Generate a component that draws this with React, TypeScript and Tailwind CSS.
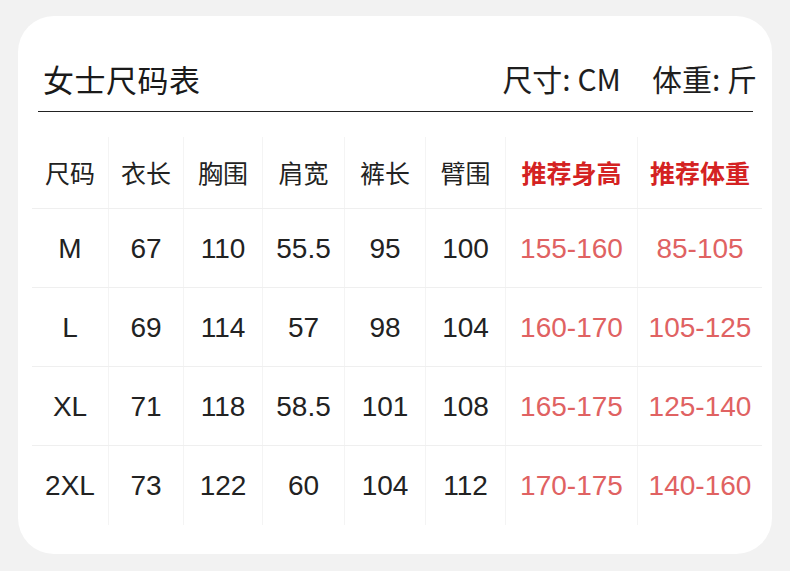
import React from "react";

const widths = [
  "w-[76px]",
  "w-[75px]",
  "w-[79px]",
  "w-[82px]",
  "w-[81px]",
  "w-[80px]",
  "w-[132px]",
  "w-[125px]",
];

const header = ["尺码", "衣长", "胸围", "肩宽", "裤长", "臂围", "推荐身高", "推荐体重"];
const rows = [
  ["M", "67", "110", "55.5", "95", "100", "155-160", "85-105"],
  ["L", "69", "114", "57", "98", "104", "160-170", "105-125"],
  ["XL", "71", "118", "58.5", "101", "108", "165-175", "125-140"],
  ["2XL", "73", "122", "60", "104", "112", "170-175", "140-160"],
];

const cjk = { fontFamily: '"Noto Sans CJK SC", "Noto Sans", sans-serif' };
const num = { fontFamily: '"Liberation Sans", Arial, sans-serif' };

export default function App() {
  return (
    <div className="w-[790px] h-[571px] bg-[#f2f2f2] pt-[16px] px-[18px]">
      <div className="w-[754px] h-[538px] bg-white rounded-[36px] pt-[44px]">
        <div className="h-[36px] flex items-center justify-between pl-[25px] pr-[15px]" style={cjk}>
          <div className="text-[31px] leading-none text-[#1a1a1a] tracking-[0.5px]">女士尺码表</div>
          <div className="text-[30px] leading-none text-[#1e1e1e] flex items-center">
            <span>尺寸: CM</span>
            <span className="ml-[31px]">体重: 斤</span>
          </div>
        </div>
        <div className="mt-[15px] ml-[20px] w-[715px] h-[1px] bg-[#222]" />
        <div className="mt-[25px] ml-[14px] w-[730px]">
          <div className="flex h-[72px] border-b border-[#efefef]">
            {header.map((h, i) => (
              <div
                key={i}
                className={`${widths[i]} shrink-0 h-full flex items-center justify-center text-[25px] leading-none ${
                  i > 0 ? "border-l border-[#f4f4f4]" : ""
                } ${i >= 6 ? "text-[#d42222] font-bold" : "text-[#222]"}`}
                style={cjk}
              >
                {h}
              </div>
            ))}
          </div>
          {rows.map((r, ri) => (
            <div
              key={ri}
              className={`flex h-[79px] ${ri < rows.length - 1 ? "border-b border-[#efefef]" : ""}`}
            >
              {r.map((c, i) => (
                <div
                  key={i}
                  className={`${widths[i]} shrink-0 h-full flex items-center justify-center text-[28px] leading-none pt-[1px] ${
                    i > 0 ? "border-l border-[#f4f4f4]" : ""
                  } ${i >= 6 ? "text-[#e06262]" : "text-[#222]"}`}
                  style={num}
                >
                  {c}
                </div>
              ))}
            </div>
          ))}
        </div>
      </div>
    </div>
  );
}
